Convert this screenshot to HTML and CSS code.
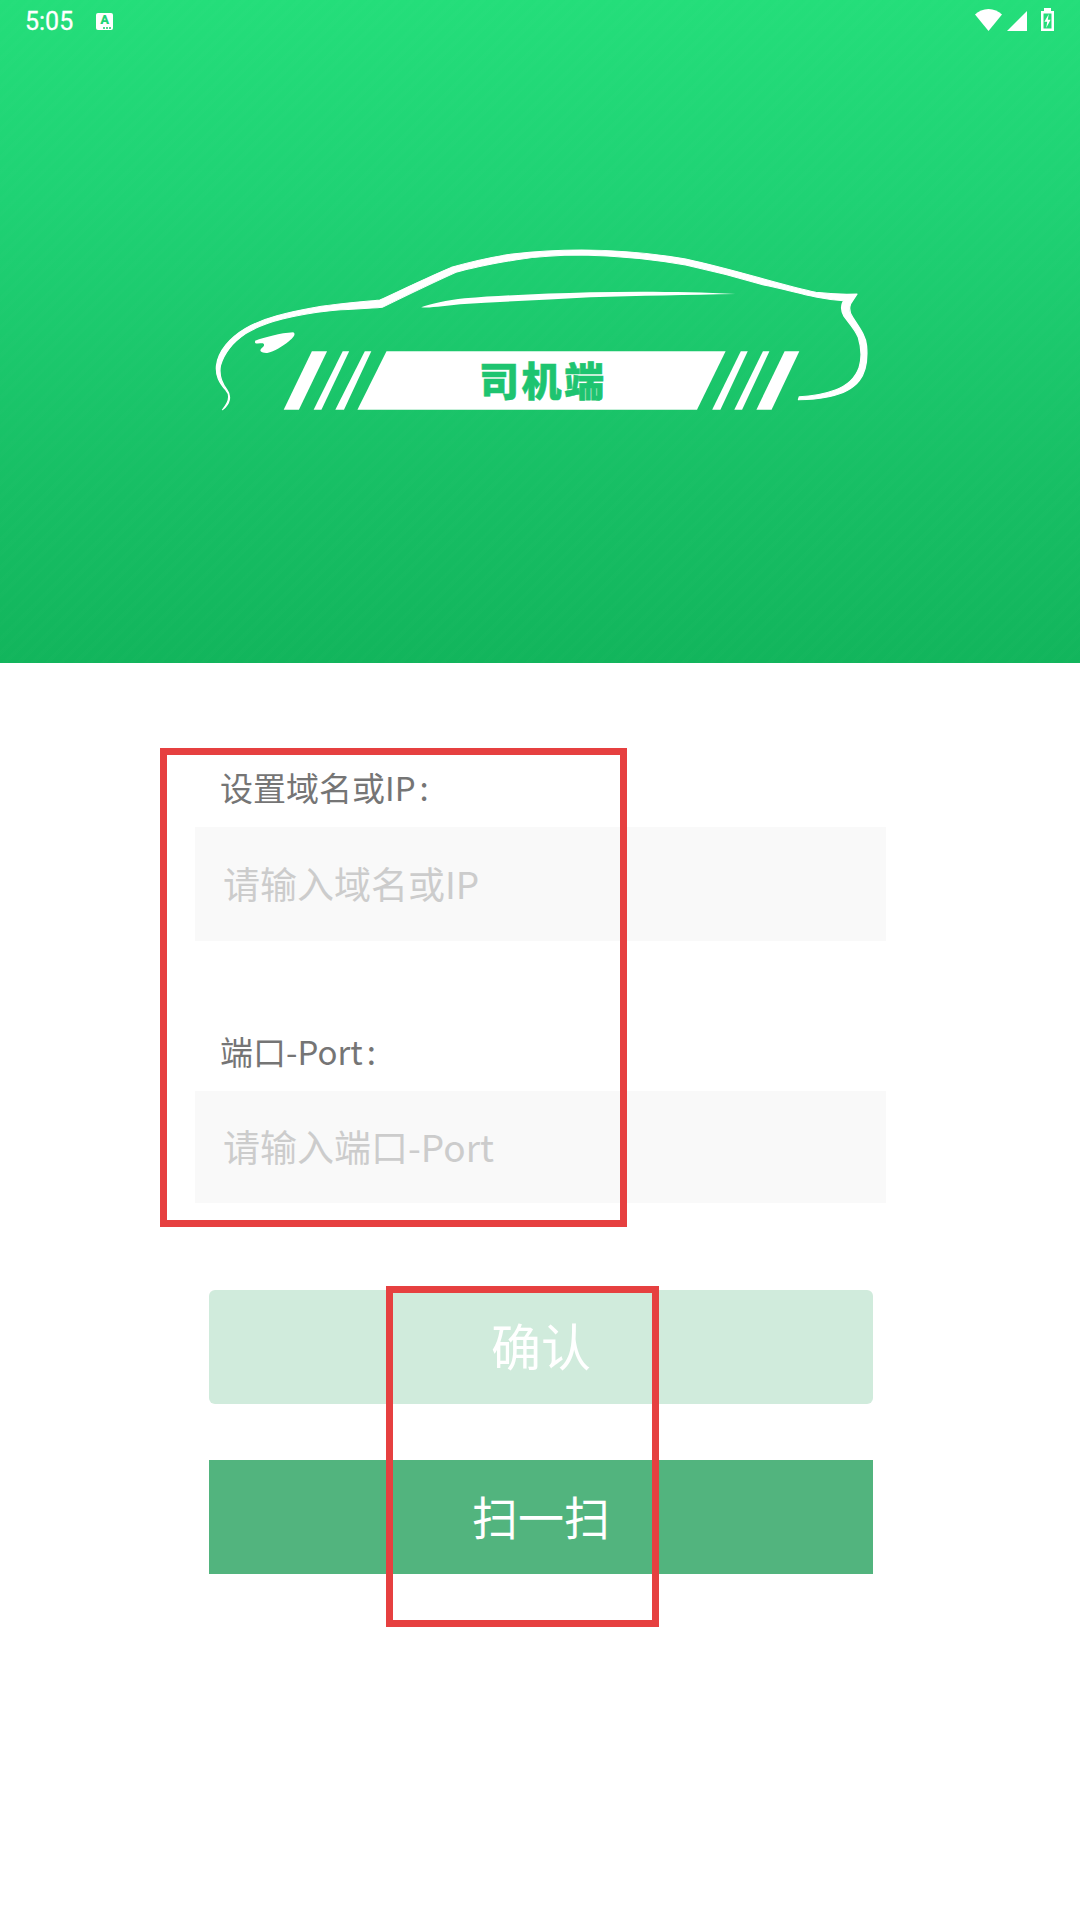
FILE: index.html
```html
<!DOCTYPE html>
<html lang="zh-CN">
<head>
<meta charset="utf-8">
<title>司机端</title>
<link rel="stylesheet" href="styles.css">
</head>
<body>
<div class="page">
  <header class="hero">
    <div class="status">
      <div class="status-left">
        <span class="time">5:05</span>
        <span class="a-icon">A</span>
      </div>
      <div class="status-right">
        <svg class="ic-wifi" viewBox="0 0 27 22"><path d="M0 5.6C3.6 2.2 8.3 0 13.5 0S23.4 2.2 27 5.6L13.5 22z"/></svg>
        <svg class="ic-signal" viewBox="0 0 20 20"><path d="M20 0v20H0z"/></svg>
        <svg class="ic-battery" viewBox="0 0 13 23"><path fill-rule="evenodd" d="M3 0h7v3h3v20H0V3h3zM2.5 5.5v15h8v-15z"/><path d="M7.8 6 3.4 13.8h2.8L5.2 20l4.4-8.2H6.8z"/></svg>
      </div>
    </div>
    <div class="logo">
      <svg class="logo-art" viewBox="0 0 1568 600" preserveAspectRatio="none">
        <path class="w outline" d="M52 542C66 520 72 500 60 484C44 460 36 440 38 410C42 365 70 325 105 298C145 268 200 250 280 232C330 222 380 218 415 213C470 180 530 142 580 115C620 100 670 85 720 75C780 66 830 63 880 63C950 63 1040 72 1120 90C1190 110 1250 132 1300 150C1350 168 1390 182 1420 190C1450 195 1490 196 1515 195L1500 225C1496 240 1497 250 1505 265C1520 295 1535 320 1537 350C1540 395 1535 430 1520 455C1505 480 1480 495 1450 503C1425 510 1400 512 1380 512L1382 503C1410 502 1440 495 1465 483C1495 468 1512 445 1520 415C1527 385 1525 355 1518 325C1510 300 1495 280 1485 262C1478 245 1478 228 1484 215C1460 213 1435 208 1420 204C1385 195 1340 178 1300 168C1240 145 1180 125 1120 108C1040 90 950 80 880 78C830 78 780 82 730 92C680 103 630 115 590 130C530 165 475 200 420 235C380 240 340 240 300 245C250 252 220 260 190 270C150 283 125 298 105 314C75 340 55 375 47 410C43 440 50 462 62 482C72 500 70 525 52 542Z"/>
        <path class="w" d="M510 235C530 225 570 214 610 208C700 198 800 194 900 190C1010 187 1130 188 1235 195C1130 198 1010 200 900 205C800 212 700 218 600 226C570 230 530 238 510 235Z"/>
        <path class="w" d="M127 335C150 325 185 312 215 310C222 315 216 325 205 337C190 352 172 368 155 372C142 373 135 366 142 358C148 352 150 347 145 343C138 343 130 345 127 342Z"/>
        <polygon class="w" points="258,367 293,367 228,542 193,542"/>
        <polygon class="w" points="329,367 344,367 280,542 262,542"/>
        <polygon class="w" points="380,367 395,367 332,542 312,542"/>
        <polygon class="w" points="430,367 1212,367 1146,542 363,542"/>
        <polygon class="w" points="1247,367 1263,367 1200,542 1181,542"/>
        <polygon class="w" points="1298,367 1313,367 1250,542 1232,542"/>
        <polygon class="w" points="1348,367 1382,367 1318,542 1283,542"/>
      </svg>
      <span class="logo-text">司机端</span>
    </div>
  </header>

  <main class="form">
    <div class="field">
      <div class="label">设置域名或IP<span class="colon">:</span></div>
      <div class="input">请输入域名或IP</div>
    </div>
    <div class="field field-second">
      <div class="label">端口-Port<span class="colon">:</span></div>
      <div class="input input-short">请输入端口-Port</div>
    </div>
    <div class="btn btn-confirm"><span class="btn-text">确认</span></div>
    <div class="btn btn-scan"><span class="btn-text">扫一扫</span></div>
  </main>

  <div class="mark mark-fields"></div>
  <div class="mark mark-buttons"></div>
</div>
</body>
</html>
```
FILE: styles.css
```css
* { box-sizing: border-box; }
html, body { margin: 0; padding: 0; }
body { background: #fff; font-family: "Noto Sans CJK SC", "Noto Sans", sans-serif; }

.page { position: relative; width: 1080px; height: 1920px; overflow: hidden; background: #fff; }

.hero {
  position: relative;
  height: 663px;
  padding-bottom: 5px;
  display: flex;
  align-items: center;
  justify-content: center;
  background:
    repeating-linear-gradient(135deg, rgba(255,255,255,.008) 0 4px, rgba(255,255,255,0) 4px 10px),
    linear-gradient(180deg, #24de7a 0%, #1fd274 30%, #1cc96d 50%, #17be64 75%, #12b55c 100%);
}

.status {
  position: absolute;
  top: 0; left: 0; right: 0;
  height: 40px;
  display: flex;
  align-items: flex-start;
  justify-content: space-between;
  padding: 0 26px 0 25px;
}
.status-left { display: flex; align-items: flex-start; gap: 23px; }
.status-right { display: flex; align-items: flex-start; }
.time {
  font-family: Roboto, sans-serif;
  font-size: 25px;
  font-weight: 400;
  line-height: 28px;
  margin-top: 8px;
  color: #fff;
  -webkit-text-stroke: .3px #fff;
}
.a-icon {
  position: relative;
  display: flex;
  align-items: flex-start;
  justify-content: center;
  width: 17px;
  height: 17px;
  margin-top: 13px;
  border-radius: 2px;
  background: #fff;
  color: #1fd477;
  font-family: Roboto, sans-serif;
  font-size: 13px;
  font-weight: 900;
  line-height: 13px;
}
.a-icon::after {
  content: "";
  position: absolute;
  right: 2px;
  bottom: 1px;
  width: 8px;
  height: 2px;
  background: repeating-linear-gradient(90deg, #4fdc92 0 2px, #fff 2px 3px);
}
.ic-wifi, .ic-signal, .ic-battery { display: block; fill: #fff; }
.ic-wifi { width: 27px; height: 22px; margin-top: 9px; }
.ic-signal { width: 20px; height: 20px; margin: 11px 0 0 5px; }
.ic-battery { width: 13px; height: 23px; margin: 8px 0 0 14px; }

.logo { position: relative; width: 680px; height: 200px; }
.logo-art { display: block; width: 100%; height: 100%; }
.logo-art .w { fill: #fff; }
.logo-art .outline { stroke: #fff; stroke-width: 3; stroke-linejoin: round; }
.logo-text {
  position: absolute;
  left: 279px;
  top: 126px;
  font-size: 40px;
  line-height: 48px;
  font-weight: 900;
  letter-spacing: 2.6px;
  color: #1ec470;
  white-space: nowrap;
  -webkit-text-stroke: .6px #1ec470;
}

.form { display: flex; flex-direction: column; padding-top: 103px; }
.field { margin-left: 195px; width: 691px; }
.field-second { margin-top: 89px; }
.label {
  padding-left: 25px;
  font-size: 33px;
  line-height: 46px;
  color: #757575;
  margin-bottom: 15px;
  position: relative;
  top: -2px;
}
.colon { margin-left: 4px; }
.input {
  height: 114px;
  padding: 0 0 3px 28px;
  display: flex;
  align-items: center;
  background: #f9f9f9;
  color: #cccccc;
  font-size: 37px;
}
.input-short { height: 112px; }

.btn {
  width: 664px;
  height: 114px;
  margin-left: 209px;
  display: flex;
  align-items: center;
  justify-content: center;
  color: #fff;
}
.btn-confirm { margin-top: 87px; background: #d0ebdc; border-radius: 6px; font-size: 50px; padding-bottom: 7px; }
.btn-scan { margin-top: 56px; background: #52b47e; font-size: 46px; padding-bottom: 5px; }

.mark { position: absolute; border: 7px solid #e64040; }
.mark-fields { left: 160px; top: 748px; width: 467px; height: 479px; }
.mark-buttons { left: 386px; top: 1286px; width: 273px; height: 341px; }
```
